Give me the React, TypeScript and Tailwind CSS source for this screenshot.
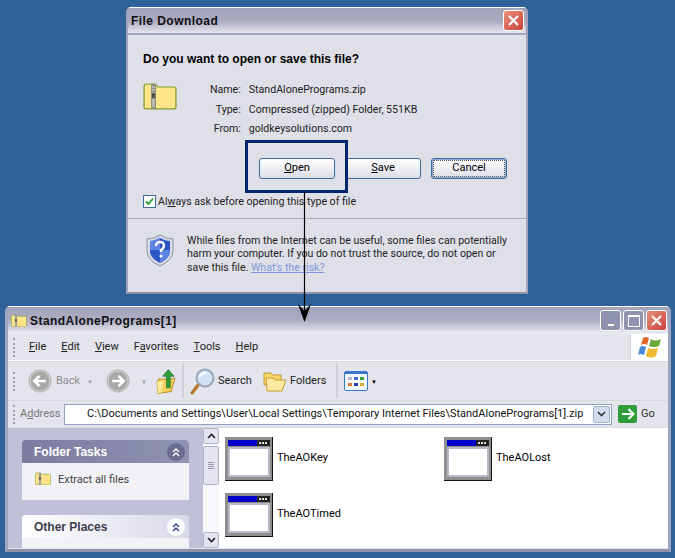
const FONT = "font-['Liberation_Sans',Arial,sans-serif]";
const BODY = "font-['Roboto',sans-serif] text-[11px]";
const DIALOG_TEXT = "font-['Roboto',sans-serif] text-[10.6px]";

function ZipFolder({ size = 34 }: { size?: number }) {
  return (
    <svg width={size} height={size * 0.82} viewBox="0 0 34 28">
      <path d="M1 5 Q1 2 4 2 H12 L15 5 H31 Q33 5 33 7 V25 Q33 27 31 27 H3 Q1 27 1 25 Z" fill="#fbe88e" stroke="#7f9a2c" strokeWidth="1.2" />
      <rect x="2" y="7" width="30" height="19" fill="#fde488" />
      <rect x="8" y="2" width="5" height="25" fill="#8c8c80" />
      <path d="M9 5h3M9 8h3M9 11h3M9 18h3M9 20h3M9 22h3M9 24h3" stroke="#e6e6e0" strokeWidth="1" />
      <rect x="9" y="11" width="3" height="5" fill="#50504a" />
    </svg>
  );
}

function CloseButton({ className }: { className: string }) {
  return (
    <div className={`flex items-center justify-center rounded-[3px] border border-white bg-gradient-to-br from-[#e8907c] to-[#c8403a] ${className}`}>
      <svg width="13" height="13" viewBox="0 0 13 13">
        <path d="M2 2 L11 11 M11 2 L2 11" stroke="#fff" strokeWidth="2.2" />
      </svg>
    </div>
  );
}

function Shield() {
  return (
    <svg width="28" height="33" viewBox="0 0 28 33" className="shrink-0">
      <path d="M14 1 Q20 5 27 5 V17 Q27 26 14 32 Q1 26 1 17 V5 Q8 5 14 1 Z" fill="#d8dbe6" stroke="#8a93a8" />
      <path d="M14 4 Q20 7 24 7 V17 Q24 24 14 29 Q4 24 4 17 V7 Q8 7 14 4 Z" fill="#2a55c4" />
      <path d="M14 4 V16 H4 V7 Q8 7 14 4 Z" fill="#5b83e0" />
      <path d="M14 16 H24 V17 Q24 24 14 29 Z" fill="#5b83e0" />
      <path d="M10 12 Q10 8 14 8 Q18 8 18 12 Q18 14 15 16 V18" fill="none" stroke="#fff" strokeWidth="2.4" />
      <circle cx="15" cy="22" r="1.6" fill="#fff" />
    </svg>
  );
}

function NavCircle({ back }: { back?: boolean }) {
  return (
    <svg width="24" height="24" viewBox="0 0 23 23">
      <circle cx="11.5" cy="11.5" r="11" fill="#b4b4b4" />
      <circle cx="11.5" cy="11.5" r="9.5" fill="#a8a8a8" stroke="#cfcfcf" />
      <path d={back ? "M17 11.5 H7 M11 6.5 L6 11.5 L11 16.5" : "M6 11.5 H16 M12 6.5 L17 11.5 L12 16.5"} fill="none" stroke="#fff" strokeWidth="2.4" />
    </svg>
  );
}

function UpFolder() {
  return (
    <svg width="20" height="27" viewBox="0 0 21 27">
      <path d="M1 14 L3 11 H14 L20 10 L16 24 L2 26 Z" fill="#f3cf5c" stroke="#b58f28" />
      <path d="M1 14 L8 13 L6 25 L2 26 Z" fill="#ffe89a" />
      <path d="M11 20 V8 H7 L13 1 L19 8 H15 V20 Z" fill="#2f9e3a" stroke="#1c6f28" strokeWidth="0.7" />
    </svg>
  );
}

function SearchIcon() {
  return (
    <svg width="25" height="28" viewBox="0 0 25 28">
      <path d="M2 26 L9 17" stroke="#b8762a" strokeWidth="3.2" strokeLinecap="round" />
      <circle cx="15" cy="11" r="8.5" fill="#cfe2f6" stroke="#9aa4b8" strokeWidth="2" />
      <path d="M10 10 Q11 6 16 6" fill="none" stroke="#fff" strokeWidth="2" />
    </svg>
  );
}

function FoldersIcon() {
  return (
    <svg width="24" height="22" viewBox="0 0 24 22">
      <path d="M1 3 H8 L10 5 H18 V15 H1 Z" fill="#f5d468" stroke="#c49a2e" />
      <path d="M3 8 H10 L12 10 H23 L19 21 H4 Z" fill="#fbe9a0" stroke="#c49a2e" />
    </svg>
  );
}

function ViewsIcon() {
  const cols = ["#b8bccc", "#3a6fc4", "#3aa040"];
  const lower = ["#e07838", "#22409c", "#e0b030"];
  return (
    <svg width="24" height="20" viewBox="0 0 24 20">
      <rect x="0.5" y="0.5" width="23" height="19" rx="1.5" fill="#f4f6fb" stroke="#3a78d0" />
      <rect x="1" y="1" width="22" height="2" fill="#3a78d0" />
      {cols.map((c, i) => (
        <rect key={c} x={4 + i * 6} y="6" width="4" height="3" fill={c} />
      ))}
      {lower.map((c, i) => (
        <rect key={c} x={4 + i * 6} y="12" width="4" height="3" fill={c} />
      ))}
    </svg>
  );
}

function XpFlag() {
  return (
    <svg width="25" height="23" viewBox="0 0 25 23">
      <path d="M6 2 Q9 0 12 2 L10 9 Q7 7 4 9 Z" fill="#e0682c" />
      <path d="M14 3 Q18 6 24 3 L22 10 Q17 12 12 10 Z" fill="#6ca83a" />
      <path d="M3 11 Q6 9 9 11 L7 19 Q3 17 1 19 Z" fill="#4a86d8" />
      <path d="M11 12 Q16 14 21 12 L19 20 Q14 23 9 20 Z" fill="#eeb92c" />
    </svg>
  );
}

function AppIcon() {
  return (
    <svg width="48" height="44" viewBox="0 0 48 44" className="shrink-0">
      <rect width="48" height="44" fill="#8f8f8f" />
      <path d="M47 0 H48 V44 H0 V43 H47 Z" fill="#111" />
      <rect x="3" y="3" width="42" height="6" fill="#0000c8" />
      <rect x="32" y="3" width="13" height="6" fill="#222" />
      <rect x="34" y="5" width="2" height="2" fill="#ddd" />
      <rect x="37" y="5" width="2" height="2" fill="#ddd" />
      <rect x="40" y="5" width="2" height="2" fill="#ddd" />
      <rect x="3" y="10" width="42" height="30" fill="#b8b8c8" />
      <rect x="5" y="12" width="38" height="26" fill="#fff" />
    </svg>
  );
}

function Chevrons({ dark }: { dark?: boolean }) {
  return (
    <div className={`flex h-[18px] w-[18px] items-center justify-center rounded-full ${dark ? "bg-[#6a6d90]" : "bg-white"}`}>
      <svg width="10" height="10" viewBox="0 0 10 10">
        <path d="M2 5 L5 2 L8 5 M2 9 L5 6 L8 9" fill="none" stroke={dark ? "#fff" : "#2a3a80"} strokeWidth="1.4" />
      </svg>
    </div>
  );
}

function Grip({ className = "" }: { className?: string }) {
  return <div className={`h-[19px] w-[2px] shrink-0 border-l-2 border-dotted border-[#9c9cac] ${className}`} />;
}

function DialogButton({ hot, rest, focused }: { hot: string; rest: string; focused?: boolean }) {
  return (
    <div className={`flex h-[21px] w-[76px] items-center justify-center rounded-[3px] border border-[#3d6a9c] bg-gradient-to-b from-white to-[#dcdce6] text-black ${focused ? "shadow-[inset_0_0_0_1px_#8fa8d8] outline-1 -outline-offset-3 outline-dotted outline-[#555]" : ""}`}>
      <span className="underline">{hot}</span>
      {rest}
    </div>
  );
}

function Item({ name }: { name: string }) {
  return (
    <div className="flex items-center gap-[4px] text-black">
      <AppIcon />
      <span className="pb-[2px]">{name}</span>
    </div>
  );
}

function FileDialog() {
  return (
    <div className="ml-[126px] h-[287px] w-[402px] rounded-t-[5px] border-x-2 border-b-2 border-t border-x-[#a0a4bc] border-b-[#8f92a8] border-t-white bg-[#dfdfe8]">
      <div className="flex h-[25px] items-center justify-between bg-gradient-to-b from-[#a2a2ba] via-[#a9a9c0] to-[#e6e6ee] pl-[3px] pr-[2px] text-[12px] font-bold tracking-[0.45px] text-[#111]">
        <span>File Download</span>
        <CloseButton className="h-[21px] w-[21px]" />
      </div>
      <div className="border-t-2 border-[#a0a4bc] pt-[15px]">
        <div className="pl-[15px] text-[12px] font-bold text-black">Do you want to open or save this file?</div>
        <div className="mt-[14px] flex pl-[15px]">
          <ZipFolder />
          <div className={`ml-[33px] grid grid-cols-[auto_1fr] gap-x-[8px] gap-y-[3.5px] leading-[16px] text-[#222] ${DIALOG_TEXT}`}>
            <span className="text-right">Name:</span>
            <span>StandAlonePrograms.zip</span>
            <span className="text-right">Type:</span>
            <span>Compressed (zipped) Folder, 551KB</span>
            <span className="text-right">From:</span>
            <span>goldkeysolutions.com</span>
          </div>
        </div>
        <div className={`mt-[21px] flex justify-end gap-[10px] pr-[19px] ${BODY}`}>
          <DialogButton hot="O" rest="pen" />
          <DialogButton hot="S" rest="ave" />
          <DialogButton hot="" rest="Cancel" focused />
        </div>
        <div className={`mt-[15px] flex items-center gap-[2px] pl-[15px] text-[#222] ${DIALOG_TEXT}`}>
          <div className="flex h-[13px] w-[13px] items-center justify-center border border-[#3d6a9c] bg-white">
            <svg width="9" height="9" viewBox="0 0 9 9">
              <path d="M1 4.5 L3.5 7 L8 1.5" fill="none" stroke="#22a030" strokeWidth="1.8" />
            </svg>
          </div>
          <span>
            Al<span className="underline">w</span>ays ask before opening this type of file
          </span>
        </div>
        <div className={`mt-[8px] flex border-t border-[#a9a9b4] pl-[18px] pt-[15px] text-[#222] ${DIALOG_TEXT}`}>
          <Shield />
          <p className="ml-[13px] w-[325px] leading-[13.5px]">
            While files from the Internet can be useful, some files can potentially harm your computer. If you do not trust the source, do not open or save this file. <span className="text-[#7f97dc] underline">What's the risk?</span>
          </p>
        </div>
      </div>
    </div>
  );
}

function ExplorerWindow() {
  return (
    <div className="ml-[5px] mt-[12px] h-[246px] w-[666px] rounded-t-[5px] border-x-[3px] border-b-[3px] border-t border-x-[#a0a4bc] border-b-[#8f92a8] border-t-white bg-[#e4e4ec]">
      {/* Title bar */}
      <div className="flex h-[27px] items-center bg-gradient-to-b from-[#a2a2ba] via-[#adadc4] to-[#eeeef4] pl-[3px] pr-[1px]">
        <ZipFolder size={16} />
        <span className="ml-[3px] text-[12px] font-bold tracking-[0.45px] text-[#111]">StandAlonePrograms[1]</span>
        <div className="ml-auto flex gap-[2px]">
          <div className="flex h-[21px] w-[21px] items-end justify-center rounded-[3px] border border-white bg-[#8f93b0] pb-[4px]">
            <div className="h-[2px] w-[6px] bg-white" />
          </div>
          <div className="flex h-[21px] w-[21px] items-center justify-center rounded-[3px] border border-white bg-[#8f93b0]">
            <div className="h-[12px] w-[12px] border border-t-2 border-white" />
          </div>
          <CloseButton className="h-[21px] w-[21px]" />
        </div>
      </div>
      {/* Menu bar */}
      <div className={`flex h-[27px] items-center border-b border-white pl-[5px] ${BODY}`}>
        <Grip className="mr-[14px]" />
        <div className="flex gap-[15px] text-[#222]">
          <span><span className="underline">F</span>ile</span>
          <span><span className="underline">E</span>dit</span>
          <span><span className="underline">V</span>iew</span>
          <span>F<span className="underline">a</span>vorites</span>
          <span><span className="underline">T</span>ools</span>
          <span><span className="underline">H</span>elp</span>
        </div>
        <div className="ml-auto flex h-full w-[38px] items-center justify-center border-l border-[#d4d4dc] bg-white">
          <XpFlag />
        </div>
      </div>
      {/* Toolbar */}
      <div className={`flex h-[40px] items-center border-y border-[#d8d8e0] pl-[5px] text-[#222] ${BODY}`}>
        <Grip className="mr-[13px]" />
        <NavCircle back />
        <span className="ml-[4px] w-[31px] text-[#8c8c90]">Back</span>
        <span className="w-[19px] text-[6px] text-[#9c9ca4]">▼</span>
        <NavCircle />
        <span className="ml-[11px] w-[15px] text-[6px] text-[#9c9ca4]">▼</span>
        <UpFolder />
        <div className="ml-[6px] mr-[6px] h-[34px] w-[2px] bg-[#cfcfd8]" />
        <SearchIcon />
        <span className="ml-[3px] w-[45px]">Search</span>
        <FoldersIcon />
        <span className="ml-[3px] w-[46px]">Folders</span>
        <div className="mr-[6px] h-[34px] w-[2px] bg-[#cfcfd8]" />
        <ViewsIcon />
        <span className="ml-[3px] text-[6px] text-black">▼</span>
      </div>
      {/* Address bar */}
      <div className={`flex h-[27px] items-center border-b border-[#d8d8e0] pl-[5px] ${BODY}`}>
        <Grip className="mr-[5px]" />
        <span className="w-[44px] shrink-0 text-[#777]">A<span className="underline">d</span>dress</span>
        <div className="flex h-[21px] w-[548px] items-center justify-between border border-[#8fa0c4] bg-white pl-[22px] pr-px text-[#111]">
          <span className="whitespace-nowrap">C:\Documents and Settings\User\Local Settings\Temporary Internet Files\StandAlonePrograms[1].zip</span>
          <div className="flex h-[17px] w-[17px] items-center justify-center rounded-[2px] border border-[#9cb0d0] bg-[#d4dcf0]">
            <svg width="9" height="6" viewBox="0 0 9 6">
              <path d="M1 1 L4.5 4.5 L8 1" fill="none" stroke="#333" strokeWidth="1.6" />
            </svg>
          </div>
        </div>
        <div className="ml-[6px] flex h-[18px] w-[19px] items-center justify-center rounded-[2px] bg-[#2f9e3a]">
          <svg width="14" height="12" viewBox="0 0 14 12">
            <path d="M1 6 H12 M7.5 1 L12.5 6 L7.5 11" fill="none" stroke="#fff" strokeWidth="2" />
          </svg>
        </div>
        <span className="ml-[4px] text-[#333]">Go</span>
      </div>
      {/* Content */}
      <div className={`flex h-[120px] overflow-hidden bg-white ${BODY}`}>
        <div className="w-[195px] shrink-0 bg-[#c0c0d8] px-[14px] pt-[12px]">
          <div className="flex h-[23px] items-center justify-between rounded-t-[4px] bg-gradient-to-r from-[#7b7c9f] to-[#9193b2] pl-[12px] pr-[4px] font-['Liberation_Sans',sans-serif] text-[12px] font-bold text-white">
            <span>Folder Tasks</span>
            <Chevrons dark />
          </div>
          <div className="flex h-[37px] items-start gap-[7px] bg-[#f1f1f6] pl-[13px] pt-[9px] text-[#444]">
            <ZipFolder size={16} />
            <span>Extract all files</span>
          </div>
          <div className="mt-[15px] flex h-[23px] items-center justify-between rounded-t-[4px] bg-gradient-to-r from-white to-[#d8d8e8] pl-[12px] pr-[4px] font-['Liberation_Sans',sans-serif] text-[12px] font-bold text-[#3c3c50]">
            <span>Other Places</span>
            <Chevrons />
          </div>
          <div className="h-[20px] bg-[#f1f1f6]" />
        </div>
        <div className="flex w-[16px] shrink-0 flex-col bg-[#f8f8fc]">
          <div className="flex h-[16px] shrink-0 items-center justify-center rounded-[2px] border border-[#b0b4c8] bg-[#e4e4f0]">
            <svg width="9" height="6" viewBox="0 0 9 6"><path d="M1 5 L4.5 1.5 L8 5" fill="none" stroke="#222" strokeWidth="1.6" /></svg>
          </div>
          <div className="mt-[2px] flex h-[39px] shrink-0 flex-col items-center justify-center gap-px rounded-[2px] border border-[#b0b4c8] bg-[#e4e4f0]">
            <div className="h-px w-[6px] bg-[#9a9aa8]" />
            <div className="h-px w-[6px] bg-[#9a9aa8]" />
            <div className="h-px w-[6px] bg-[#9a9aa8]" />
            <div className="h-px w-[6px] bg-[#9a9aa8]" />
          </div>
          <div className="mt-auto flex h-[16px] shrink-0 items-center justify-center rounded-[2px] border border-[#b0b4c8] bg-[#e4e4f0]">
            <svg width="9" height="6" viewBox="0 0 9 6"><path d="M1 1 L4.5 4.5 L8 1" fill="none" stroke="#222" strokeWidth="1.6" /></svg>
          </div>
        </div>
        <div className="grid flex-1 grid-cols-[219px_1fr] content-start gap-y-[12px] pl-[6px] pt-[9px]">
          <Item name="TheAOKey" />
          <Item name="TheAOLost" />
          <Item name="TheAOTimed" />
        </div>
      </div>
    </div>
  );
}

export default function App() {
  return (
    <div className={`relative h-[558px] w-[675px] overflow-hidden bg-[#2f6299] pt-[7px] ${FONT}`}>
      <FileDialog />
      <ExplorerWindow />
      {/* Annotation: highlight box and arrow */}
      <div className="absolute left-[245px] top-[140px] h-[53px] w-[103px] border-[3px] border-[#03256c]" />
      <svg className="absolute left-[296px] top-[192px]" width="18" height="132" viewBox="0 0 18 132">
        <path d="M8.5 0 V128" stroke="#000" strokeWidth="1.2" />
        <path d="M2 112 L8.5 130 L15 112 L8.5 119 Z" fill="#000" />
      </svg>
    </div>
  );
}
